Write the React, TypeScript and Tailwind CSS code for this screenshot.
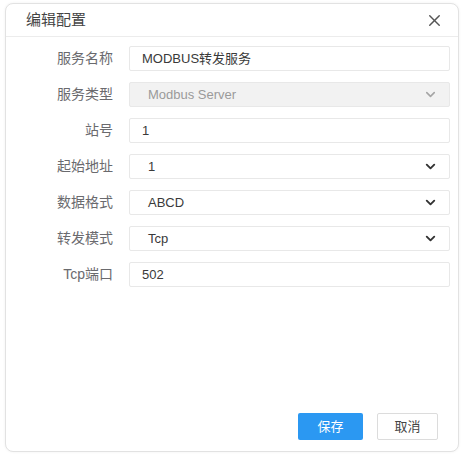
import { ChevronDown, X } from "lucide-react"

const font = { fontFamily: '"Liberation Sans", "Noto Sans CJK SC", sans-serif' }

type Field = {
  label: string
  value: string
  kind: "input" | "select"
  disabled?: boolean
}

const fields: Field[] = [
  { label: "服务名称", value: "MODBUS转发服务", kind: "input" },
  { label: "服务类型", value: "Modbus Server", kind: "select", disabled: true },
  { label: "站号", value: "1", kind: "input" },
  { label: "起始地址", value: "1", kind: "select" },
  { label: "数据格式", value: "ABCD", kind: "select" },
  { label: "转发模式", value: "Tcp", kind: "select" },
  { label: "Tcp端口", value: "502", kind: "input" },
]

const FieldRow = ({ field }: { field: Field }) => {
  const isSelect = field.kind === "select"
  return (
    <div className="flex items-center">
      <label className="w-[107px] shrink-0 text-right text-[14px] text-[#6a6a6e]">
        {field.label}
      </label>
      <div
        className={`ml-[16px] flex h-[25px] flex-1 items-center rounded-[2px] border border-[#e8e8e8] ${
          field.disabled ? "bg-[#f2f2f2]" : "bg-white"
        } ${isSelect ? "pl-[18px] pr-[11px]" : "pl-[12px]"}`}
      >
        <span
          className={`flex-1 text-[13px] ${
            field.disabled ? "text-[#9a9a9a]" : "text-[#3a3a3a]"
          }`}
        >
          {field.value}
        </span>
        {isSelect && (
          <ChevronDown
            size={15}
            strokeWidth={field.disabled ? 2.5 : 3}
            className={field.disabled ? "text-[#a5a5a5]" : "text-[#333]"}
          />
        )}
      </div>
    </div>
  )
}

export default function App() {
  return (
    <div className="h-[457px] w-[465px] bg-white pl-[5px] pt-[3px]" style={font}>
      <div className="flex h-[449px] w-[454px] flex-col rounded-[8px] border border-[#e2e2e2] bg-white shadow-[0_0_3px_rgba(0,0,0,0.06)]">
        <div className="flex h-[33px] shrink-0 items-center justify-between border-b border-[#ececec] pl-[20px] pr-[14px]">
          <span className="text-[15px] text-[#444]">编辑配置</span>
          <X size={19} strokeWidth={1.8} className="text-[#555]" />
        </div>
        <div className="flex flex-1 flex-col pr-[8px] pt-[9px]">
          <div className="flex flex-col gap-[11px]">
            {fields.map((f) => (
              <FieldRow key={f.label} field={f} />
            ))}
          </div>
          <div className="mt-auto flex justify-end gap-[14px] pb-[11px] pr-[12px]">
            <button className="h-[27px] w-[65px] rounded-[2px] bg-[#2b98f2] text-[13px] text-white">
              保存
            </button>
            <button className="h-[27px] w-[61px] rounded-[2px] border border-[#dcdcdc] bg-white text-[13px] text-[#444]">
              取消
            </button>
          </div>
        </div>
      </div>
    </div>
  )
}
